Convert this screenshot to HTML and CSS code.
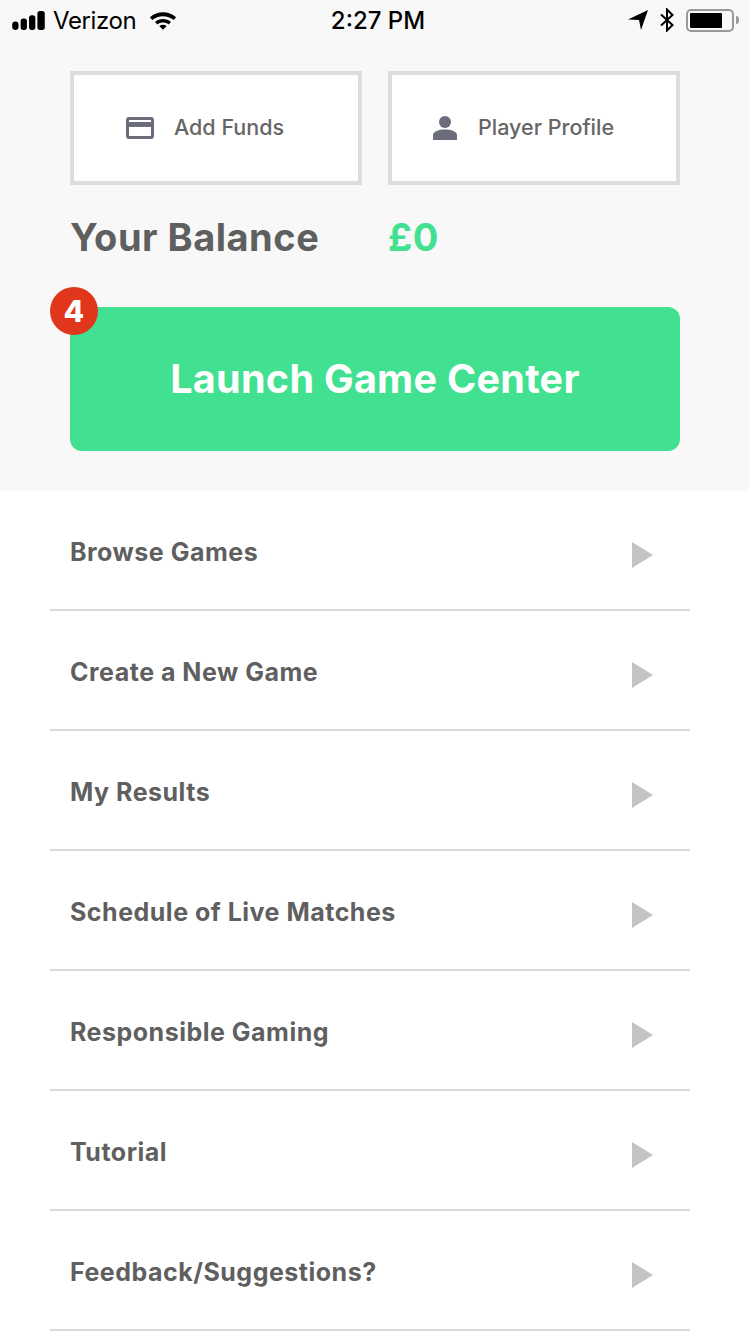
FILE: index.html
```html
<!DOCTYPE html>
<html lang="en">
<head>
  <meta charset="UTF-8" />
  <meta name="viewport" content="width=device-width, initial-scale=1.0" />
  <title>Menu</title>
  <link rel="stylesheet" href="styles.css">
</head>
<body>
  <section class="top">
    <div class="status-bar">
      <div class="status-left">
        <svg class="signal" width="33" height="21" viewBox="0 0 31 20">
          <rect x="0" y="11" width="6" height="8" rx="3"/>
          <rect x="8" y="8" width="6" height="11" rx="2.5"/>
          <rect x="16" y="5" width="6" height="14" rx="2.5"/>
          <rect x="24" y="1" width="7" height="18" rx="2.5"/>
        </svg>
        <span class="carrier">Verizon</span>
        <svg class="wifi" width="28" height="21" viewBox="0 0 30 22">
          <path d="M1 7.500C9 .5 21 .5 29 7.500L26.500 10.500C20 5 10 5 3.500 10.500Z"/>
          <path d="M6.500 12.500C11.500 8.500 18.500 8.500 23.500 12.500L21 15.200C17.500 12.400 12.500 12.400 9 15.200Z"/>
          <path d="M11 16.800C13.500 15 16.500 15 19 16.800L15 21Z"/>
        </svg>
      </div>
      <div class="status-time">2:27 PM</div>
      <div class="status-right">
        <svg width="20" height="22" viewBox="0 0 20 22">
          <path d="M0 10.500L20 1L13 21L11 11Z"/>
        </svg>
        <svg class="bt" width="16" height="24" viewBox="0 0 16 24">
          <path d="M2 6.500L13.500 17L8 22.500V1.500L13.500 7L2 17.500" fill="none" stroke="#000" stroke-width="2"/>
        </svg>
        <div class="battery"><div class="battery-fill"></div></div>
        <div class="battery-tip"></div>
      </div>
    </div>

    <div class="actions">
      <a class="action action-funds">
        <svg width="28" height="22" viewBox="0 0 28 22">
          <path fill-rule="evenodd" d="M3 0H25A3 3 0 0 1 28 3V19A3 3 0 0 1 25 22H3A3 3 0 0 1 0 19V3A3 3 0 0 1 3 0ZM3 3V5H25V3ZM3 10V19H25V10Z"/>
        </svg>
        <span>Add Funds</span>
      </a>
      <a class="action action-profile">
        <svg width="26" height="24" viewBox="0 0 26 24">
          <circle cx="13" cy="6" r="6"/>
          <path d="M1 24V19C1 15.500 7 13.500 13 13.500S25 15.500 25 19V24Z"/>
        </svg>
        <span>Player Profile</span>
      </a>
    </div>

    <div class="balance">
      <span class="balance-label">Your Balance</span>
      <span class="balance-value">£0</span>
    </div>

    <a class="launch">
      <span class="badge">4</span>
      Launch Game Center
    </a>
  </section>

  <ul class="menu">
    <li>Browse Games<i class="arrow"></i></li>
    <li>Create a New Game<i class="arrow"></i></li>
    <li>My Results<i class="arrow"></i></li>
    <li>Schedule of Live Matches<i class="arrow"></i></li>
    <li>Responsible Gaming<i class="arrow"></i></li>
    <li>Tutorial<i class="arrow"></i></li>
    <li>Feedback/Suggestions?<i class="arrow"></i></li>
  </ul>
</body>
</html>
```

FILE: styles.css
```css
:root {
  --text: #5f5f5f;
  --green: #42e191;
  --icon: #6b6d7b;
}

html, body {
  height: 1334px;
  overflow: hidden;
}

body {
  margin: 0;
  background: white;
  color: var(--text);
  font-family: 'Inter', sans-serif;
}

.top {
  height: 491px;
  box-sizing: border-box;
  background: #f8f8f8;
}

.status-bar {
  height: 40px;
  display: grid;
  grid-template-columns: 1fr auto 1fr;
  align-items: center;
  color: black;
}

.status-left {
  display: flex;
  align-items: center;
  padding-left: 12px;
}

.signal {
  margin-right: 8px;
}

.carrier {
  font-weight: 400;
  font-size: 24px;
  letter-spacing: -0.4px;
}

.wifi {
  margin-left: 13px;
}

.status-time {
  padding-left: 6px;
  font-weight: 500;
  font-size: 24px;
}

.status-right {
  display: flex;
  align-items: center;
  justify-content: flex-end;
  padding-right: 11px;
}

.bt {
  margin-left: 11px;
}

.battery {
  width: 48px;
  height: 23px;
  margin-left: 11px;
  padding: 2px;
  box-sizing: border-box;
  border: 2px solid #999;
  border-radius: 5px;
}

.battery-fill {
  width: 32px;
  height: 100%;
  background: black;
  border-radius: 1px;
}

.battery-tip {
  width: 3px;
  height: 8px;
  margin-left: 2px;
  background: #999;
  border-radius: 0 3px 3px 0;
}

.actions {
  display: grid;
  grid-template-columns: 1fr 1fr;
  gap: 26px;
  margin: 31px 70px 0;
}

.action {
  height: 114px;
  box-sizing: border-box;
  display: flex;
  align-items: center;
  background: white;
  border: 4px solid #dddddd;
  color: #666;
  font-size: 21.500px;
  font-weight: 500;
}

.action svg {
  fill: var(--icon);
}

.action span {
  margin-bottom: 2px;
}

.action-funds {
  padding-left: 52px;
  gap: 20px;
}

.action-profile {
  padding-left: 40px;
  gap: 20px;
}

.balance {
  display: flex;
  align-items: center;
  height: 106px;
  padding-bottom: 2px;
  box-sizing: border-box;
  font-size: 38px;
  font-weight: 700;
  letter-spacing: 0.5px;
  margin: 0 70px;
}

.balance-label {
  width: 318px;
}

.balance-value {
  color: var(--green);
}

.launch {
  position: relative;
  display: flex;
  align-items: center;
  justify-content: center;
  height: 144px;
  margin: 16px 70px 0;
  background: var(--green);
  border-radius: 12px;
  color: white;
  font-size: 39.500px;
  font-weight: 700;
  letter-spacing: 0.3px;
}

.badge {
  position: absolute;
  left: -20px;
  top: -20px;
  width: 48px;
  height: 48px;
  display: flex;
  align-items: center;
  justify-content: center;
  background: #e0361c;
  border-radius: 50%;
  font-size: 30px;
  font-weight: 800;
}

.menu {
  list-style: none;
  margin: 0 60px 0 50px;
  padding: 0;
}

.menu li {
  display: flex;
  align-items: center;
  justify-content: space-between;
  height: 120px;
  box-sizing: border-box;
  padding: 4px 37px 0 20px;
  border-bottom: 2px solid #d8d8d8;
  font-size: 25px;
  font-weight: 700;
  letter-spacing: 0.5px;
}

.arrow {
  width: 0;
  height: 0;
  margin-top: 6px;
  border-left: 21px solid #c4c4c4;
  border-top: 13px solid transparent;
  border-bottom: 13px solid transparent;
}
```
